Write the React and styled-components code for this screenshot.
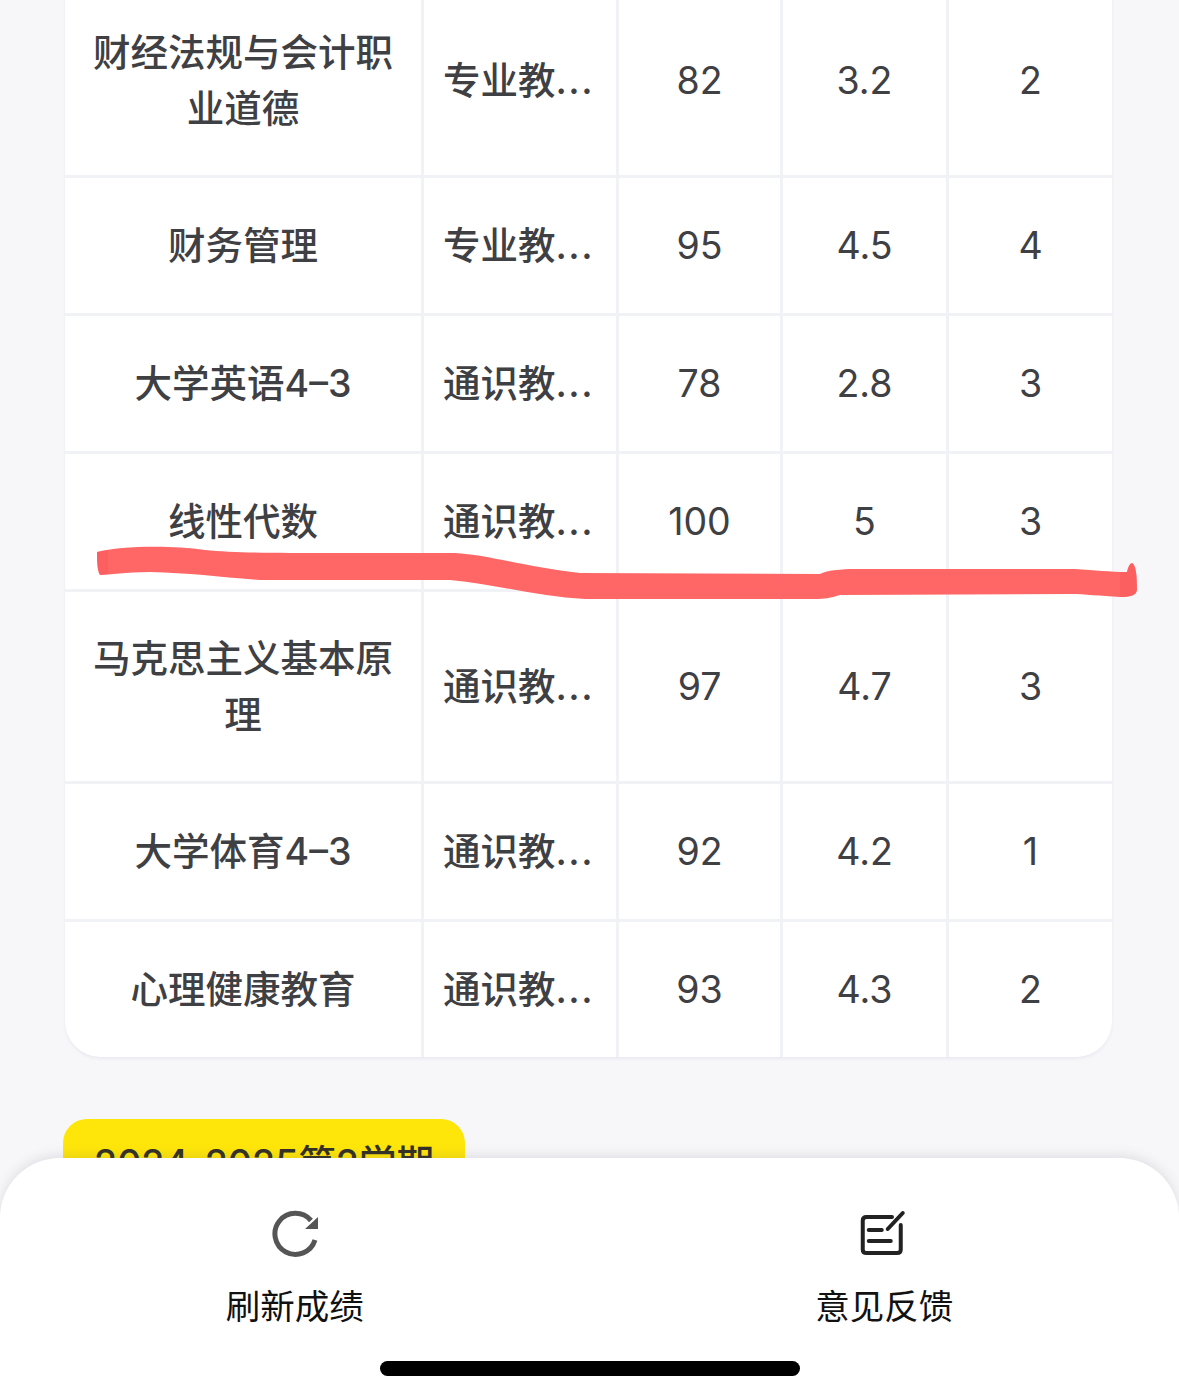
import React from "react";
import styled, { createGlobalStyle } from "styled-components";

const GlobalStyle = createGlobalStyle`
  html, body {
    margin: 0;
    padding: 0;
    background: #f7f7fa;
    font-family: Inter, "Noto Sans CJK SC", sans-serif;
  }
`;

const Page = styled.div`
  position: relative;
  width: 1179px;
  height: 1400px;
  overflow: hidden;
  background: #f7f7fa;
`;

const Content = styled.div`
  margin-top: -14px;
  padding: 0 67px 0 63px;
`;

const Table = styled.div`
  display: grid;
  grid-template-columns: 356px 192px 161px 163px 163px;
  gap: 3px;
  margin-left: 2px;
  background: #f1f2f6;
  border-radius: 0 0 36px 36px;
  overflow: hidden;
  box-shadow: 0 2px 3px rgba(230, 231, 238, 0.8);
`;

const Cell = styled.div`
  box-sizing: border-box;
  min-height: 135px;
  display: flex;
  align-items: center;
  justify-content: ${props => (props.$left ? "flex-start" : "center")};
  padding: 38.5px ${props => (props.$left ? "19px" : "20px")};
  background: #fff;
  color: #3f4043;
  font-size: 37.5px;
  font-weight: ${props => (props.$number ? 400 : 500)};
  line-height: 56px;
  text-align: center;
  white-space: ${props => (props.$left ? "nowrap" : "normal")};
`;

const Dots = styled.span`
  letter-spacing: 1.5px;
`;

const TermTag = styled.div`
  width: 402px;
  height: 90px;
  margin-top: 62px;
  padding-top: 17px;
  box-sizing: border-box;
  background: #ffe60a;
  border-radius: 24px;
  color: #333026;
  font-size: 37.5px;
  font-weight: 500;
  line-height: 56px;
  text-align: center;
`;

const Scribble = styled.svg`
  position: absolute;
  left: 0;
  top: 0;
  pointer-events: none;
`;

const Sheet = styled.div`
  position: absolute;
  left: 0;
  right: 0;
  bottom: 0;
  height: 242px;
  display: flex;
  background: #fff;
  border-radius: 60px 60px 0 0;
  box-shadow: 0 -3px 12px rgba(90, 90, 100, 0.14);
`;

const Action = styled.div`
  flex: 1;
  display: flex;
  flex-direction: column;
  align-items: center;
  padding-top: 50px;
`;

const ActionIcon = styled.svg`
  display: block;
  width: 50px;
  height: 50px;
`;

const ActionLabel = styled.div`
  margin-top: 23px;
  color: #111;
  font-size: 34.5px;
  line-height: 52px;
`;

const HomeBar = styled.div`
  position: absolute;
  left: 380px;
  top: 203px;
  width: 420px;
  height: 15px;
  border-radius: 8px;
  background: #000;
`;

const rows = [
  ["财经法规与会计职业道德", "专业教", "82", "3.2", "2"],
  ["财务管理", "专业教", "95", "4.5", "4"],
  ["大学英语4–3", "通识教", "78", "2.8", "3"],
  ["线性代数", "通识教", "100", "5", "3"],
  ["马克思主义基本原理", "通识教", "97", "4.7", "3"],
  ["大学体育4–3", "通识教", "92", "4.2", "1"],
  ["心理健康教育", "通识教", "93", "4.3", "2"]
];

const App = () => (
  <Page>
    <GlobalStyle />
    <Content>
      <Table>
        {rows.map(row =>
          row.map((value, index) => (
            <Cell key={row[0] + index} $left={index === 1} $number={index > 1}>
              {index === 1 ? (
                <span>
                  {value}
                  <Dots>...</Dots>
                </span>
              ) : (
                value
              )}
            </Cell>
          ))
        )}
      </Table>
      <TermTag>2024-2025第2学期</TermTag>
    </Content>
    <Scribble width="1179" height="1400" viewBox="0 0 1179 1400">
      <path
        d="M97 552 C120 546 170 545 205 550 C235 553 280 553 330 553 L455 553 C490 555 530 568 580 573 L820 574 C828 570 835 570 850 569 L1075 569 C1095 570 1110 572 1127 572 C1128 568 1129 564 1132 563 C1136 565 1137 575 1137 590 C1136 596 1130 597 1120 597 C1100 596 1085 594 1070 594 L840 595 C830 598 825 599 815 599 L585 599 C540 597 500 585 450 580 L260 580 C220 577 190 573 150 572 C125 572 110 575 100 575 C97 570 97 560 97 552 Z"
        fill="#ff5a5a"
        fillOpacity="0.92"
      />
      <path
        d="M97 552 L108 550 L108 574 L100 575 C97 570 97 560 97 552 Z"
        fill="#f5504f"
        fillOpacity="0.35"
      />
      <path
        d="M1127 572 C1128 568 1129 564 1132 563 C1136 565 1137 575 1137 590 C1136 596 1130 597 1120 597 L1120 572 Z"
        fill="#f5504f"
        fillOpacity="0.35"
      />
    </Scribble>
    <Sheet>
      <Action>
        <ActionIcon viewBox="0 0 50 50">
          <path
            d="M45 32 A20.5 20.5 0 1 1 41 12.5"
            fill="none"
            stroke="#555"
            strokeWidth="5"
          />
          <path d="M48 9 L48 21 L35 21 Z" fill="#555" />
        </ActionIcon>
        <ActionLabel>刷新成绩</ActionLabel>
      </Action>
      <Action>
        <ActionIcon viewBox="0 0 50 50">
          <path
            d="M33 9 H7.5 Q3.75 9 3.75 12.5 V41.5 Q3.75 45 7.5 45 H38 Q41.75 45 41.75 41.5 V17"
            fill="none"
            stroke="#222"
            strokeWidth="4"
            strokeLinecap="round"
          />
          <path
            d="M28.75 21 L43.75 5 M9.75 22 H22.75 M9.75 33 H31.75"
            fill="none"
            stroke="#222"
            strokeWidth="4"
            strokeLinecap="round"
          />
        </ActionIcon>
        <ActionLabel>意见反馈</ActionLabel>
      </Action>
      <HomeBar />
    </Sheet>
  </Page>
);

export default App;
